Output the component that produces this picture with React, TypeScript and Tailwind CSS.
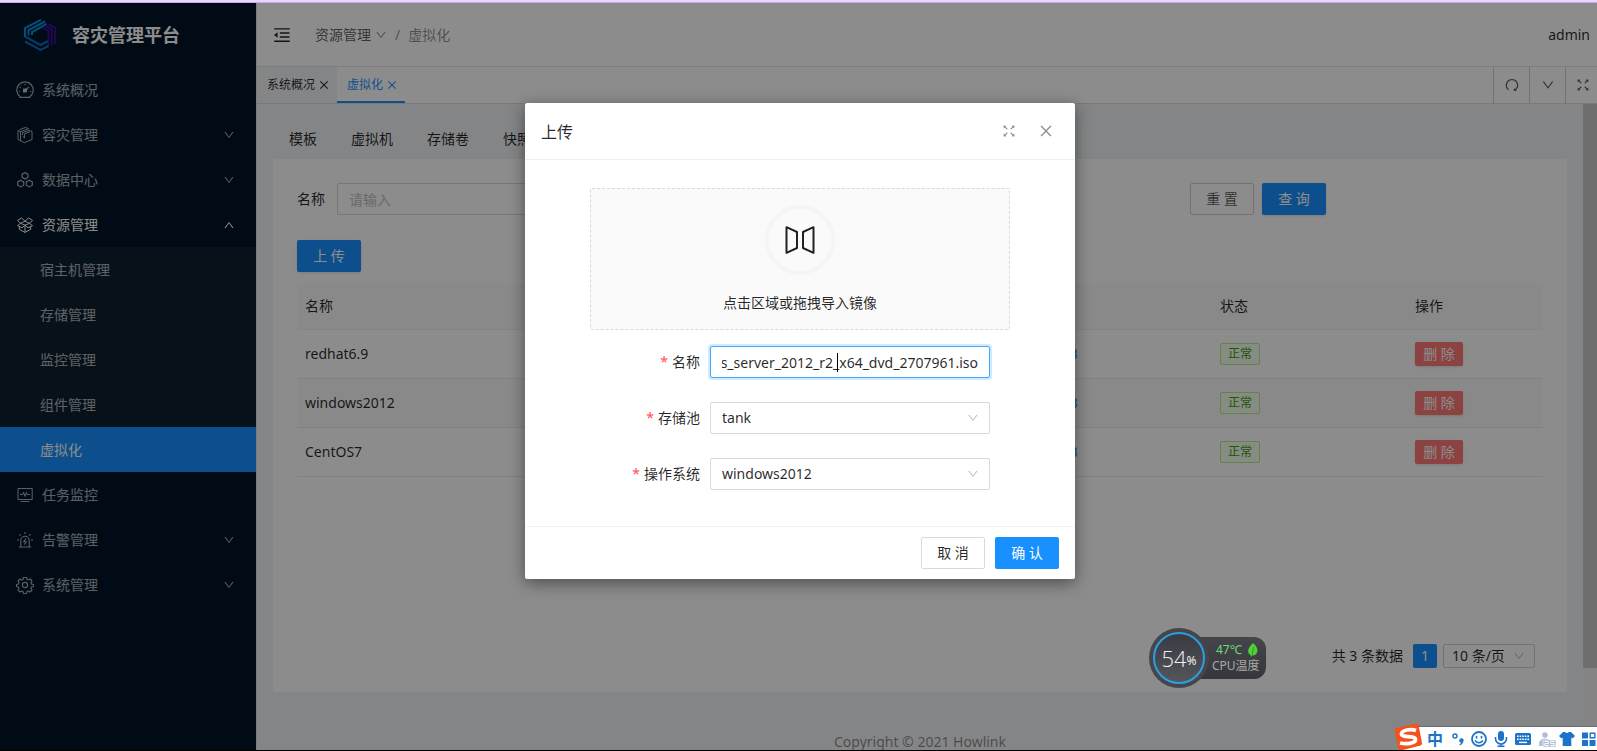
import React from "react";
import {
  AiOutlineClose,
  AiOutlineDown,
  AiOutlineFullscreen,
  AiOutlineMenuFold,
  AiOutlineRedo,
  AiOutlineUp,
} from "react-icons/ai";

type MenuItem = {
  label: string;
  icon: React.ReactNode;
  arrow?: boolean;
  children?: string[];
};

const DashboardIcon = () => (
  <svg viewBox="0 0 18 18" className="size-[18px]" fill="none" stroke="currentColor" strokeWidth="1.2">
    <path d="M4.5 16A8.2 8.2 0 1 1 13.5 16M3.5 16.3H14.5" />
    <path d="M9 3V4.2M3.6 6 4.6 6.6M2.8 10.5H4M14 10.5H15.2" />
    <path d="M12.8 6 9.5 9.5" />
    <path d="M7.6 8.2h2.6v2.6H7.6z" fill="currentColor" />
  </svg>
);

const CubeIcon = () => (
  <svg viewBox="0 0 18 18" className="size-[18px]" fill="none" stroke="currentColor" strokeWidth="1">
    <path d="M3.500 3.500 9.500 1.500 13 2.800M2 4.500V13.500L8.500 16.700 16 13.500V5.500L14.500 4.500" />
    <path d="M4.500 14.500V5.500L11.500 3.200M6.500 9V6.500L14 4.200M8.600 12V7.800L14.500 5.500M2 4.500 4.500 5.500M6.500 10 8.600 12" />
  </svg>
);

const ClusterIcon = () => (
  <svg viewBox="0 0 18 18" className="size-[18px]" fill="none" stroke="currentColor" strokeWidth="1.2">
    <path d="M9 1.6 11.9 3.2V6.3L9 8 6.1 6.3V3.2z" />
    <path d="M4.7 9.2 7.7 10.9V14.2L4.7 15.9 1.7 14.2V10.9z" />
    <path d="M13.3 9.2 16.3 10.9V14.2L13.3 15.9 10.3 14.2V10.9z" />
  </svg>
);

const BoxIcon = () => (
  <svg viewBox="0 0 18 18" className="size-[18px]" fill="none" stroke="currentColor" strokeWidth="1" strokeLinejoin="round">
    <path d="M9 5.2 12.5 2 16.5 4.3 13.5 7.3 9 5.2 4.5 7.3 1.5 4.3 5.5 2z" />
    <path d="M4.5 7.3 1.5 9.6 6 11.8 9 9.2 12 11.8 16.5 9.6 13.5 7.3 9 9.2z" />
    <path d="M3.3 10.6V13.4L9 16.4 14.7 13.4V10.6M9 9.2V16.4" />
  </svg>
);

const MonitorIcon = () => (
  <svg viewBox="0 0 18 18" className="size-[18px]" fill="none" stroke="currentColor" strokeWidth="1">
    <path d="M2 2.5H16.2V13.5H2zM4.5 15.5H13.5" />
    <path d="M4 8.5H6.5L7.6 6.3 9 10.4 10.4 6.5 11.4 8.5H14" />
  </svg>
);

const AlarmIcon = () => (
  <svg viewBox="0 0 18 18" className="size-[18px]" fill="none" stroke="currentColor" strokeWidth="1.100">
    <path d="M4.800 15.500V9.500a4.200 4.200 0 0 1 8.400 0V15.500M2.800 16H15.200" />
    <path d="M9 1V3M3.500 3.300 4.700 4.500M14.500 3.300 13.300 4.500M1 9H3M15 9H17" />
    <path d="M9.800 7.500 7.800 10.700H10.200L8.300 13.500" />
  </svg>
);

const GearIcon = () => (
  <svg viewBox="0 0 18 18" className="size-[18px]" fill="none" stroke="currentColor" strokeWidth="1.100" strokeLinejoin="round">
    <path d="M7.500 1.500h3l.5 2 1.200.5 1.800-1 2 2-1 1.800.5 1.200 2 .5v2l-2 .5-.5 1.200 1 1.800-2 2-1.800-1-1.200.5-.5 2h-3l-.5-2-1.200-.5-1.800 1-2-2 1-1.800-.5-1.200-2-.5v-2l2-.5.5-1.200-1-1.800 2-2 1.800 1 1.200-.5z" />
    <circle cx="9" cy="9" r="2.600" />
  </svg>
);

const LogoIcon = () => (
  <svg viewBox="0 0 32 32" className="size-8" fill="none" strokeWidth="2">
    <path d="M1 18V9L17 0.8M4.5 16.5V11L21 2.5M8 16V13L22.5 5" stroke="#0d8de0" />
    <path d="M24 5 31 8.5V25M18.5 8.5 24.5 11.5V27M27.8 26.5V10L21 6.6" stroke="#3c0d94" />
    <path d="M1 17.5 16.5 26 24 22M1 22.5 16.5 30.8 24.5 27" stroke="#0c6cc0" />
  </svg>
);

const MirrorIcon = () => (
  <svg viewBox="0 0 30 28" className="w-[30px] h-7" fill="none" stroke="#222" strokeWidth="2" strokeLinejoin="round">
    <path d="M1.5 1.2 12 6V22L1.5 26.8z" />
    <path d="M28.5 1.2 18 6V22L28.5 26.8z" />
  </svg>
);

const menu: MenuItem[] = [
  { label: "系统概况", icon: <DashboardIcon /> },
  { label: "容灾管理", icon: <CubeIcon />, arrow: true },
  { label: "数据中心", icon: <ClusterIcon />, arrow: true },
  {
    label: "资源管理",
    icon: <BoxIcon />,
    children: ["宿主机管理", "存储管理", "监控管理", "组件管理", "虚拟化"],
  },
  { label: "任务监控", icon: <MonitorIcon /> },
  { label: "告警管理", icon: <AlarmIcon />, arrow: true },
  { label: "系统管理", icon: <GearIcon />, arrow: true },
];

const templates = [
  { name: "redhat6.9", size: "3.59 GB" },
  { name: "windows2012", size: "5.35 GB" },
  { name: "CentOS7", size: "4.38 GB" },
];

const Sidebar = () => (
  <aside className="w-64 shrink-0 bg-[#001529] text-white/65">
    <div className="flex h-16 items-center gap-4 pl-6">
      <LogoIcon />
      <h1 className="text-lg font-bold text-white">容灾管理平台</h1>
    </div>
    <nav>
      {menu.map((item) => (
        <div key={item.label}>
          <button
            className={`flex h-[45px] w-full items-center gap-2 pl-4 pr-[21px] ${
              item.children ? "text-white" : ""
            }`}
          >
            {item.icon}
            <span className="flex-1 text-left">{item.label}</span>
            {item.arrow && <AiOutlineDown className="size-3" />}
            {item.children && <AiOutlineUp className="size-3" />}
          </button>
          {item.children && (
            <div className="bg-[#0c1f2f]">
              {item.children.map((child) => (
                <a
                  key={child}
                  href="#"
                  className={`flex h-[45px] items-center pl-10 ${
                    child === "虚拟化" ? "bg-[#1890ff] text-white" : ""
                  }`}
                >
                  {child}
                </a>
              ))}
            </div>
          )}
        </div>
      ))}
    </nav>
  </aside>
);

const Header = () => (
  <header className="flex h-16 items-center border-b border-[#e4e4e4] bg-white pl-[15px] pr-[10px]">
    <button aria-label="收起菜单">
      <AiOutlineMenuFold className="size-5" />
    </button>
    <nav className="ml-[23px] flex flex-1 items-center text-black/45">
      <a href="#" className="flex items-center gap-1 text-black/65">
        资源管理
        <AiOutlineDown className="size-3 text-black/45" />
      </a>
      <span className="mx-2">/</span>
      <span>虚拟化</span>
    </nav>
    <span>admin</span>
  </header>
);

const PageTabs = () => (
  <div className="flex h-[37px] border-b border-[#dcdcdc] bg-white text-xs">
    <div className="flex items-center gap-[3px] bg-[#f0f2f5] pl-[10px] pr-[7px]">
      系统概况
      <button aria-label="关闭">
        <AiOutlineClose className="size-3" />
      </button>
    </div>
    <div className="flex items-center gap-[3px] border-b-2 border-[#1890ff] pl-[10px] pr-[7px] pt-[2px] text-[#1890ff]">
      虚拟化
      <button aria-label="关闭">
        <AiOutlineClose className="size-3" />
      </button>
    </div>
    <div className="ml-auto flex text-black/65">
      <button aria-label="刷新" className="flex w-9 items-center justify-center border-l border-[#d0d0d0]">
        <AiOutlineRedo className="size-4" />
      </button>
      <button aria-label="更多" className="flex w-9 items-center justify-center border-l border-[#d0d0d0]">
        <AiOutlineDown className="size-[14px]" />
      </button>
      <button aria-label="全屏" className="flex w-[35px] items-center justify-center border-l border-[#d0d0d0]">
        <AiOutlineFullscreen className="size-4" />
      </button>
    </div>
  </div>
);

const TemplateTable = () => (
  <table className="mt-[11px] w-full table-fixed text-left">
    <colgroup>
      <col />
      <col className="w-[195px]" />
      <col className="w-[195px]" />
      <col className="w-[136px]" />
    </colgroup>
    <thead>
      <tr className="h-[46px] border-b border-[#f0f0f0] bg-[#fafafa]">
        <th className="px-2 font-normal">名称</th>
        <th className="px-[10px] font-normal">大小</th>
        <th className="px-2 font-normal">状态</th>
        <th className="px-2 font-normal">操作</th>
      </tr>
    </thead>
    <tbody>
      {templates.map((row) => (
        <tr key={row.name} className="h-[49px] border-b border-[#ececec] even:bg-[#fafafa]">
          <td className="px-2">{row.name}</td>
          <td className="px-[10px]">
            <a href="#" className="text-[#1890ff]">
              {row.size}
            </a>
          </td>
          <td className="px-2">
            <span className="inline-flex h-[22px] items-center rounded-xs border border-[#b7eb8f] bg-[#f6ffed] px-[7px] align-middle text-xs text-[#389e0d]">
              正常
            </span>
          </td>
          <td className="px-2">
            <button className="inline-flex h-6 w-12 items-center justify-center rounded-xs bg-[#ff7875] align-middle text-white shadow-sm">
              删 除
            </button>
          </td>
        </tr>
      ))}
    </tbody>
  </table>
);

const Content = () => (
  <main className="flex-1 px-4">
    <div className="flex h-[55px] items-center gap-[34px] px-4 pt-[14px]">
      {["模板", "虚拟机", "存储卷", "快照"].map((tab) => (
        <button key={tab}>{tab}</button>
      ))}
    </div>
    <section className="flex min-h-[533px] flex-col rounded-xs bg-white p-6">
      <form className="flex items-center pr-[217px]">
        <label htmlFor="keyword">名称</label>
        <input
          id="keyword"
          placeholder="请输入"
          className="ml-3 h-8 w-[300px] rounded-xs border border-[#d9d9d9] px-[11px] placeholder:text-[#bfbfbf]"
        />
        <button type="button" className="ml-auto h-8 w-16 rounded-xs border border-[#d0d0d0] text-black/65">
          重 置
        </button>
        <button type="button" className="ml-2 h-8 w-16 rounded-xs bg-[#1890ff] text-white shadow-sm">
          查 询
        </button>
      </form>
      <button className="mt-[25px] h-8 w-16 shrink-0 rounded-xs bg-[#1890ff] text-white shadow-sm">
        上 传
      </button>
      <TemplateTable />
      <div className="mt-auto flex items-center justify-end pr-2">
        <span>共 3 条数据</span>
        <button className="ml-[10px] size-6 rounded-xs bg-[#1890ff] text-white">1</button>
        <div className="relative ml-[6px]">
          <select
            aria-label="每页条数"
            className="block h-6 w-[92px] appearance-none rounded-xs border border-[#d0d0d0] pl-2"
          >
            <option>10 条/页</option>
          </select>
          <AiOutlineDown className="pointer-events-none absolute right-[10px] top-[6px] size-3 text-black/25" />
        </div>
      </div>
    </section>
    <footer className="mt-10 text-center text-black/45">Copyright © 2021 Howlink</footer>
  </main>
);

const FormRow = ({ id, label, children }: { id: string; label: string; children: React.ReactNode }) => (
  <div className="flex items-center justify-end gap-[10px] pr-5">
    <label htmlFor={id} className="flex items-center gap-1">
      <span className="text-[#ff4d4f]">*</span>
      {label}
    </label>
    <div className="relative w-[280px]">{children}</div>
  </div>
);

const FormSelect = ({ id, value }: { id: string; value: string }) => (
  <>
    <select
      id={id}
      className="block h-8 w-full appearance-none rounded-xs border border-[#d9d9d9] bg-white px-[11px]"
    >
      <option>{value}</option>
    </select>
    <AiOutlineDown className="pointer-events-none absolute right-[11px] top-[10px] size-3 text-black/25" />
  </>
);

const UploadModal = () => {
  const nameRef = React.useRef<HTMLInputElement>(null);

  // long file names are shown from their end
  React.useEffect(() => {
    const input = nameRef.current;
    if (input) input.scrollLeft = input.scrollWidth;
  }, []);

  return (
    <div
      role="dialog"
      aria-label="上传"
      className="w-[550px] rounded-xs bg-white shadow-[0_4px_16px_rgba(0,0,0,0.45)]"
    >
      <div className="flex h-[57px] items-center border-b border-[#f0f0f0] pl-4 pr-[21px]">
        <h2 className="flex-1 pt-[2px] text-base">上传</h2>
        <button aria-label="全屏" className="text-black/45">
          <AiOutlineFullscreen className="size-4" />
        </button>
        <button aria-label="关闭" className="ml-[21px] text-black/45">
          <AiOutlineClose className="size-4" />
        </button>
      </div>
      <div className="px-[65px] pb-9 pt-7">
        <button className="flex h-[142px] w-full flex-col items-center rounded-xs border border-dashed border-[#d9d9d9] bg-[#fafafa] pt-4">
          <span className="flex size-[70px] items-center justify-center rounded-full border-4 border-[#f5f5f5]">
            <MirrorIcon />
          </span>
          <span className="mt-[18px]">点击区域或拖拽导入镜像</span>
        </button>
        <form className="mt-4 flex flex-col gap-6">
          <FormRow id="name" label="名称">
            <input
              id="name"
              ref={nameRef}
              defaultValue="cn_windows_server_2012_r2_x64_dvd_2707961.iso"
              className="block h-8 w-full rounded-xs border border-[#40a9ff] px-[11px] shadow-[0_0_0_2px_rgba(24,144,255,0.2)] outline-none"
            />
            <span className="absolute left-[127px] top-[7px] h-[19px] w-px bg-black" />
          </FormRow>
          <FormRow id="pool" label="存储池">
            <FormSelect id="pool" value="tank" />
          </FormRow>
          <FormRow id="os" label="操作系统">
            <FormSelect id="os" value="windows2012" />
          </FormRow>
        </form>
      </div>
      <div className="flex justify-end gap-[10px] border-t border-[#f0f0f0] px-4 py-[10px]">
        <button className="h-8 w-16 rounded-xs border border-[#d9d9d9]">取 消</button>
        <button className="h-8 w-16 rounded-xs bg-[#1890ff] text-white">确 认</button>
      </div>
    </div>
  );
};

const CpuWidget = () => (
  <div className="absolute bottom-[62px] right-[331px] flex items-center">
    <div className="z-10 flex size-[60px] items-center justify-center rounded-full bg-[#45464c]">
      <div className="flex size-[52px] items-center justify-center rounded-full border-2 border-[#2b9fe0] bg-linear-to-b from-[#393a42] to-[#55565c] text-[#f0f0f0]">
        <span className="font-['Open_Sans'] text-[22px] font-light leading-none">54</span>
        <span className="pt-[6px] text-xs leading-none">%</span>
      </div>
    </div>
    <div className="-ml-6 flex h-[42px] w-[81px] flex-col justify-center rounded-xl bg-linear-to-b from-[#45464c] to-[#36373b] pl-[27px] text-xs leading-4">
      <span className="flex items-center gap-[6px] pl-1 text-[#6fdc78]">
        47℃
        <svg viewBox="0 0 10 14" className="h-[14px] w-[10px]">
          <path d="M5 0C9 3 11 8 8 11 7 12.500 5.500 12.500 4 12.500L3 14 2.500 12C-1 10-1 6 5 0z" fill="#4fd03a" />
          <path d="M5.500 4 4 12.500" stroke="#2b8a20" strokeWidth="0.8" />
        </svg>
      </span>
      <span className="text-[#a8a8a8]">CPU温度</span>
    </div>
  </div>
);

const ImeBar = () => (
  <div className="absolute bottom-0 right-0 flex h-6 w-[194px] items-center gap-[2px] overflow-x-visible border-t border-[#6b6b72] bg-white pl-[14px] text-[#1c73c9]">
    <svg viewBox="0 0 28 28" className="absolute -left-[9px] -top-[4px] size-7">
      <path d="M2.500 5 22 0.500Q24 0.200 24.500 2L28 20Q28.200 22 26.500 22.500L7 27.500Q5 27.800 4.500 26L0.500 8Q0.200 5.500 2.500 5z" fill="#f4511e" />
      <path
        d="M22 7.500C17 5.500 7.500 7 7.500 11 7.500 15 21.500 12 21.500 16.500 21.500 20.500 12 21.500 6 20"
        fill="none"
        stroke="#fff"
        strokeWidth="3.800"
      />
    </svg>
    <span className="w-5 shrink-0 pl-[10px] text-base font-bold leading-5">中</span>
    <svg viewBox="0 0 146 20" className="ml-[11px] h-5 w-[146px] shrink-0" fill="currentColor">
      <circle cx="5" cy="7" r="2" fill="none" stroke="currentColor" strokeWidth="1.400" />
      <path d="M9.500 10.500a2.200 2.200 0 1 1 3.800 2.200Q12.600 15.500 9.800 16.500L9.400 15.600Q11 14.600 11 13.500A2 2 0 0 1 9.500 10.500z" />
      <circle cx="29" cy="10" r="7" fill="none" stroke="currentColor" strokeWidth="1.800" />
      <path d="M26.500 7V9.500M31.500 7V9.500M25 11.500Q29 16 33 11.500" fill="none" stroke="currentColor" strokeWidth="1.600" />
      <rect x="48" y="2" width="6" height="10" rx="3" />
      <path d="M45.500 8V9.500A5.500 5.500 0 0 0 56.500 9.500V8M51 15V17.500M47.500 17.300H54.500" fill="none" stroke="currentColor" strokeWidth="1.600" />
      <rect x="65" y="4" width="16" height="12" rx="1.500" />
      <path d="M67 7.200H79M67 10.200H79" stroke="#fff" strokeWidth="1.600" strokeDasharray="1.600 1" />
      <path d="M69 13.400H77" stroke="#fff" strokeWidth="1.400" />
      <g fill="#b3bfd6">
        <circle cx="95" cy="6" r="2.800" />
        <path d="M89 14Q90 9.500 95 9.500 98 9.500 99.500 11V17H89z" />
        <rect x="93" y="11" width="13" height="7" stroke="#fff" strokeWidth="0.600" />
      </g>
      <path d="M94.500 12.500H98.500V14.500H94.800V16.500H98.800M104.500 12.500H100.800V14.500H104.200V16.500H100.500" fill="none" stroke="#fff" strokeWidth="0.900" />
      <path d="M113 3H115Q117 5 119 3H121L125 7 122.500 9.500 121.300 8.600V17H112.700V8.600L111.500 9.500 109 7z" />
      <path d="M132 3.500h6v6h-6zM132 11h6v6h-6zM139.500 11h6v6h-6z" />
      <path d="M140.200 4.200h4.600v4.600h-4.600z" fill="none" stroke="currentColor" strokeWidth="1.400" />
    </svg>
  </div>
);

const App = () => (
  <div className="relative flex h-screen flex-col overflow-hidden border-b border-black bg-[#f0f2f5] font-['Noto_Sans','Noto_Sans_CJK_SC',sans-serif] text-sm text-black/85">
    <div className="h-[3px] shrink-0 border-b border-[#c9a6f2] bg-[#ead6ff]" />
    {/* the shell runs 3px past the right edge of the window */}
    <div className="relative -mr-[3px] flex min-h-0 flex-1">
      <Sidebar />
      <div className="flex min-w-0 flex-1 flex-col border-l border-[#e4e4e4]">
        <Header />
        <PageTabs />
        <div className="flex min-h-0 flex-1 overflow-hidden">
          <Content />
          <div className="w-[17px] shrink-0 bg-[#f1f1f1]">
            <div className="h-[564px] bg-[#c8c8c8]" />
          </div>
        </div>
      </div>
      <div className="absolute inset-0 flex items-start justify-center bg-black/45 pt-[100px]">
        <UploadModal />
      </div>
    </div>
    <CpuWidget />
    <ImeBar />
  </div>
);

export default App;
